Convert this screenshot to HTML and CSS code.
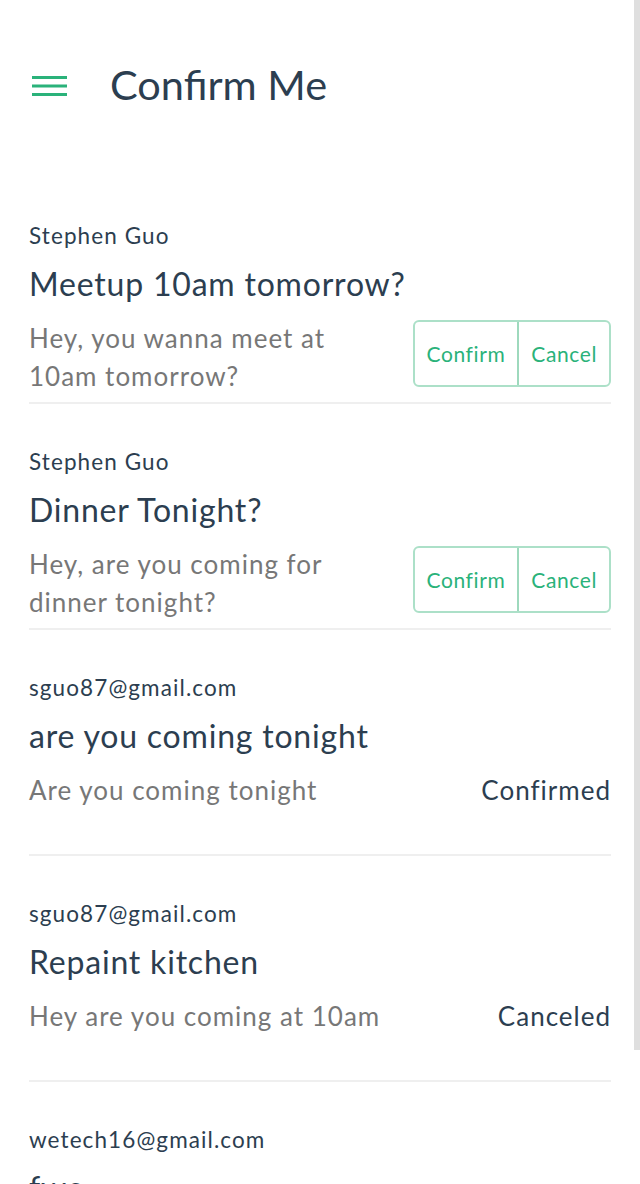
FILE: index.html
```html
<!DOCTYPE html>
<html lang="en">
<head>
<meta charset="utf-8">
<title>Confirm Me</title>
<link rel="stylesheet" href="styles.css">
</head>
<body>
<div class="app">
  <header class="topbar">
    <button class="menu-btn" aria-label="Menu">
      <svg width="35" height="20" viewBox="0 0 35 20" aria-hidden="true">
        <rect x="0" y="0" width="35" height="3" fill="currentColor"/>
        <rect x="0" y="8.5" width="35" height="3" fill="currentColor"/>
        <rect x="0" y="17" width="35" height="3" fill="currentColor"/>
      </svg>
    </button>
    <h1 class="app-title">Confirm Me</h1>
  </header>

  <main class="list">
    <article class="item">
      <div class="sender">Stephen Guo</div>
      <div class="subject">Meetup 10am tomorrow?</div>
      <div class="row">
        <p class="message">Hey, you wanna meet at 10am tomorrow?</p>
        <div class="actions">
          <button class="action">Confirm</button>
          <button class="action">Cancel</button>
        </div>
      </div>
    </article>

    <article class="item">
      <div class="sender">Stephen Guo</div>
      <div class="subject">Dinner Tonight?</div>
      <div class="row">
        <p class="message">Hey, are you coming for dinner tonight?</p>
        <div class="actions">
          <button class="action">Confirm</button>
          <button class="action">Cancel</button>
        </div>
      </div>
    </article>

    <article class="item">
      <div class="sender">sguo87@gmail.com</div>
      <div class="subject">are you coming tonight</div>
      <div class="row">
        <p class="message">Are you coming tonight</p>
        <div class="status">Confirmed</div>
      </div>
    </article>

    <article class="item">
      <div class="sender">sguo87@gmail.com</div>
      <div class="subject">Repaint kitchen</div>
      <div class="row">
        <p class="message">Hey are you coming at 10am</p>
        <div class="status">Canceled</div>
      </div>
    </article>

    <article class="item">
      <div class="sender">wetech16@gmail.com</div>
      <div class="subject">fwe</div>
      <div class="row">
        <p class="message">fwe</p>
        <div class="status">Confirmed</div>
      </div>
    </article>
  </main>

  <div class="scroll-thumb" aria-hidden="true"></div>
</div>
</body>
</html>
```
FILE: styles.css
```css
html, body {
  margin: 0;
  padding: 0;
  background: #ffffff;
  overflow: hidden;
}

body {
  font-family: "Lato", "Noto Sans", sans-serif;
  color: #2c3e50;
}

.app {
  position: relative;
  width: 640px;
  min-height: 1184px;
}

.topbar {
  height: 172px;
  display: flex;
  align-items: center;
  padding-left: 32px;
  box-sizing: border-box;
}

.menu-btn {
  display: flex;
  padding: 0;
  margin: 0;
  border: 0;
  background: none;
  color: #2ab27a;
  cursor: pointer;
}

.app-title {
  margin: 0 0 2px 43px;
  font-size: 41.5px;
  font-weight: 400;
  line-height: 1;
  color: #2c3e50;
}

.list {
  padding: 6px 29px 0 29px;
}

.item {
  padding-top: 43px;
  border-bottom: 2px solid #efefef;
}

.sender {
  font-size: 22.5px;
  line-height: 30px;
  letter-spacing: 1.1px;
  color: #2c3e50;
}

.subject {
  margin-top: 13px;
  font-size: 32px;
  line-height: 40px;
  letter-spacing: 0.8px;
  color: #2c3e50;
}

.row {
  margin-top: 15px;
  margin-bottom: 7px;
  display: flex;
  align-items: flex-start;
  gap: 32px;
}

.message {
  flex: 1;
  margin: 0;
  min-height: 76px;
  font-size: 26px;
  line-height: 38px;
  letter-spacing: 1px;
  color: #777777;
}

.actions {
  display: flex;
  margin-top: 1px;
  height: 67px;
  box-sizing: border-box;
  border: 2px solid #ace0c8;
  border-radius: 6px;
}

.action {
  padding: 0 12px;
  margin: 0;
  border: 0;
  background: none;
  font-family: inherit;
  font-size: 21px;
  letter-spacing: 0.6px;
  color: #2ab27a;
  cursor: pointer;
}

.action + .action {
  border-left: 2px solid #9ed9bd;
}

.status {
  font-size: 26px;
  line-height: 38px;
  letter-spacing: 1px;
  color: #2c3e50;
}

.scroll-thumb {
  position: absolute;
  top: 0;
  right: 0;
  width: 6px;
  height: 1050px;
  background: #dfdfdf;
}
```
